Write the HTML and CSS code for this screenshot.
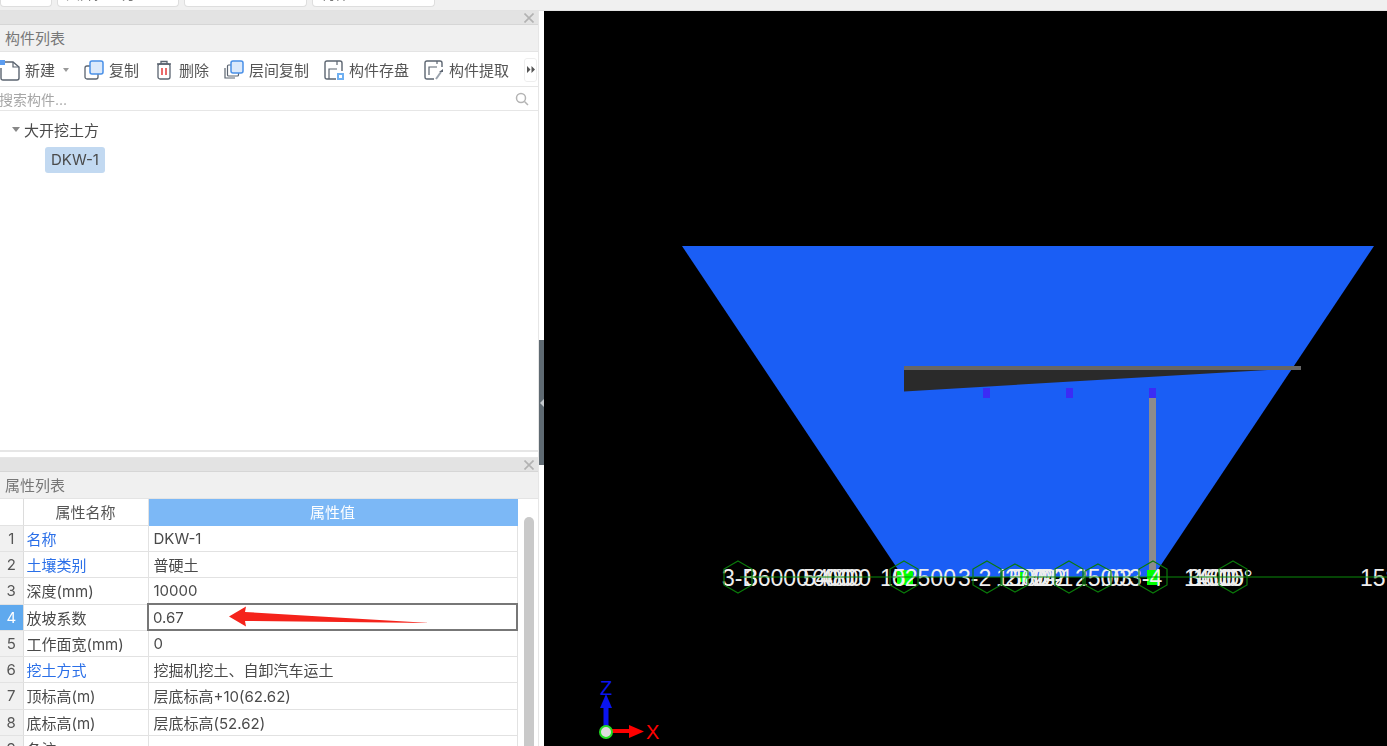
FILE: index.html
```html
<!doctype html>
<html lang="en">
  <head>
    <meta charset="UTF-8" />
    <title>构件列表</title>
    <link rel="stylesheet" href="styles.css">
  </head>
  <body>
    <div class="topbar">
      <div class="combo combo-first"></div>
      <div class="combo combo-second"><span>大开挖土方</span></div>
      <div class="combo combo-wide"></div>
      <div class="combo combo-wide"><span>构件</span></div>
    </div>

    <div class="main">
      <div class="left">
        <section class="panel panel-list">
          <div class="dock">
            <svg width="10" height="10" viewBox="0 0 10 10" stroke="#b2b2b2" stroke-width="1.6"><path d="M0.500 0.500L9.500 9.500M9.500 0.500L0.500 9.500"/></svg>
          </div>
          <div class="title">构件列表</div>
          <div class="toolbar">
            <div class="tool tool-new">
              <svg width="20" height="22" viewBox="0 0 20 22" fill="none">
                <path d="M2 3H13L19 8V19Q19 21 17 21H3Q1 21 1 19V9" stroke="#5b6470" stroke-width="1.4"/>
                <path d="M13 3V8H19" stroke="#5b6470" stroke-width="1.2"/>
                <rect x="0" y="1" width="5" height="5" fill="#5c9df0"/>
              </svg>
              <span>新建</span>
              <i class="caret"></i>
            </div>
            <div class="tool tool-copy">
              <svg width="20" height="20" viewBox="0 0 20 20" fill="none">
                <rect x="1" y="6" width="13" height="13" rx="2" fill="#fff" stroke="#5b6470" stroke-width="1.3"/>
                <rect x="6" y="1" width="13" height="13" rx="2" fill="#dbe9fb" stroke="#4a90e8" stroke-width="1.5"/>
              </svg>
              <span>复制</span>
            </div>
            <div class="tool tool-del">
              <svg width="16" height="20" viewBox="0 0 16 20" fill="none" stroke="#5b6470" stroke-width="1.3">
                <path d="M1 4H15M5 4V1.500H11V4"/>
                <rect x="2" y="4" width="12" height="15" rx="2"/>
                <path d="M6 8V15M10 8V15" stroke="#e33a3a" stroke-width="1.5"/>
              </svg>
              <span>删除</span>
            </div>
            <div class="tool tool-floor">
              <svg width="20" height="20" viewBox="0 0 20 20" fill="none">
                <path d="M1 8V18H11" stroke="#5b6470" stroke-width="1.2"/>
                <rect x="3.500" y="5" width="11" height="11" rx="1" fill="#fff" stroke="#5b6470" stroke-width="1.2"/>
                <rect x="7" y="1" width="12" height="12" rx="2" fill="#dbe9fb" stroke="#4a90e8" stroke-width="1.5"/>
              </svg>
              <span>层间复制</span>
            </div>
            <div class="tool tool-save">
              <svg width="20" height="20" viewBox="0 0 20 20" fill="none">
                <path d="M12 19H3Q1 19 1 17V3Q1 1 3 1H16Q18 1 18 3V11" stroke="#5b6470" stroke-width="1.4"/>
                <path d="M5 19V9H13M13 1V5" stroke="#5b6470" stroke-width="1.2"/>
                <rect x="13" y="13" width="7" height="7" fill="#6fb0f2"/>
                <rect x="15" y="15" width="3" height="3" fill="#fff"/>
              </svg>
              <span>构件存盘</span>
            </div>
            <div class="tool tool-get">
              <svg width="20" height="20" viewBox="0 0 20 20" fill="none">
                <path d="M10 19H3Q1 19 1 17V3Q1 1 3 1H16Q18 1 18 3V7" stroke="#5b6470" stroke-width="1.4"/>
                <path d="M5 15V7H13M13 1V4" stroke="#5b6470" stroke-width="1.2"/>
                <path d="M12 19L17 12" stroke="#9aa3ad" stroke-width="2"/>
                <path d="M15 12H19V9Z" fill="#5b6470"/>
              </svg>
              <span>构件提取</span>
            </div>
            <div class="more">
              <svg width="8" height="7" viewBox="0 0 8 7" fill="#555"><path d="M0 0L3.500 3.500L0 7ZM4.500 0L8 3.500L4.500 7Z"/></svg>
            </div>
          </div>
          <div class="search">
            <span>搜索构件...</span>
            <svg width="14" height="14" viewBox="0 0 14 14" fill="none" stroke="#b4b4b4" stroke-width="1.5">
              <circle cx="6" cy="6" r="4.500"/>
              <path d="M9.500 9.500L13 13"/>
            </svg>
          </div>
          <div class="tree">
            <div class="tree-root"><i class="tree-caret"></i><span>大开挖土方</span></div>
            <div class="tree-item"><span class="chip">DKW-1</span></div>
          </div>
        </section>

        <section class="panel panel-props">
          <div class="dock">
            <svg width="10" height="10" viewBox="0 0 10 10" stroke="#b2b2b2" stroke-width="1.6"><path d="M0.500 0.500L9.500 9.500M9.500 0.500L0.500 9.500"/></svg>
          </div>
          <div class="title">属性列表</div>
          <div class="table-wrap">
            <table class="props">
              <thead>
                <tr><th class="num"></th><th class="name">属性名称</th><th class="value">属性值</th></tr>
              </thead>
              <tbody>
                <tr><td class="num">1</td><td class="link key">名称</td><td>DKW-1</td></tr>
                <tr><td class="num">2</td><td class="link key">土壤类别</td><td>普硬土</td></tr>
                <tr><td class="num">3</td><td class="key">深度(mm)</td><td>10000</td></tr>
                <tr class="selected"><td class="num">4</td><td class="key">放坡系数</td><td class="editing">0.67</td></tr>
                <tr><td class="num">5</td><td class="key">工作面宽(mm)</td><td>0</td></tr>
                <tr><td class="num">6</td><td class="link key">挖土方式</td><td>挖掘机挖土、自卸汽车运土</td></tr>
                <tr><td class="num">7</td><td class="key">顶标高(m)</td><td>层底标高+10(62.62)</td></tr>
                <tr><td class="num">8</td><td class="key">底标高(m)</td><td>层底标高(52.62)</td></tr>
                <tr><td class="num">9</td><td class="key">备注</td><td></td></tr>
              </tbody>
            </table>
            <div class="scrollbar"><div class="thumb"></div></div>
          </div>
          <svg class="red-arrow" width="204" height="22" viewBox="228 606 204 22">
            <path d="M229 616.500L246 606.500L245 612L430 623L245 621L246 626.500Z" fill="#f5231b"/>
          </svg>
        </section>
      </div>

      <div class="splitter">
        <div class="handle"><i></i></div>
      </div>

      <svg class="view" viewBox="544 11 843 735" width="843" height="735">
        <path d="M682 246H1374L1153 577H903Z" fill="#1a5ef5"/>
        <path d="M904 368H1300L904 391.500Z" fill="#2a2a2a"/>
        <rect x="904" y="366" width="397" height="4" fill="#666"/>
        <g fill="#3b2cf5">
          <rect x="983" y="388" width="7" height="10"/>
          <rect x="1066" y="388" width="7" height="10"/>
          <rect x="1149" y="388" width="7" height="10"/>
        </g>
        <rect x="1149" y="398" width="7" height="174" fill="#8c8c8c"/>
        <g fill="#0f0">
          <rect x="897" y="570" width="16" height="15"/>
          <rect x="1147" y="570" width="13" height="15"/>
          <rect x="1020" y="572" width="8" height="10"/>
        </g>
        <g class="labels">
          <text x="722" y="586">3-B</text>
          <text x="745" y="586">36000</text>
          <text x="803" y="586">5400</text>
          <text x="812" y="586">6000</text>
          <text x="820" y="586">4800</text>
          <text x="880" y="586">15</text>
          <text x="892" y="586">02500</text>
          <text x="958" y="586">3-2</text>
          <text x="996" y="586">1500</text>
          <text x="1005" y="586">2700</text>
          <text x="1012" y="586">1800</text>
          <text x="1033" y="586">2-2</text>
          <text x="1040" y="586">2-1</text>
          <text x="1075" y="586">2500</text>
          <text x="1100" y="586">.03</text>
          <text x="1129" y="586">3-4</text>
          <text x="1184" y="586">1400</text>
          <text x="1188" y="586">3600</text>
          <text x="1193" y="586">1600</text>
          <text x="1218" y="586">15°</text>
          <text x="1360" y="586">15°</text>
        </g>
        <path d="M740 577H1387" stroke="#0a8a0a" stroke-width="1.200"/>
        <g class="hex" fill="none" stroke="#0a7a0a" stroke-width="1.200">
          <path d="M738 561L752 569V585L738 593L724 585V569Z"/>
          <path d="M904 561L918 569V585L904 593L890 585V569Z"/>
          <path d="M987 561L1001 569V585L987 593L973 585V569Z"/>
          <path d="M1015 564L1028 571V585L1015 592L1002 585V571Z"/>
          <path d="M1069 561L1083 569V585L1069 593L1055 585V569Z"/>
          <path d="M1098 564L1111 571V585L1098 592L1085 585V571Z"/>
          <path d="M1153 561L1167 569V585L1153 593L1139 585V569Z"/>
          <path d="M1233 561L1247 569V585L1233 593L1219 585V569Z"/>
        </g>
        <path d="M606 731V706" stroke="#0a14f0" stroke-width="5"/>
        <path d="M600 708L606 694L612 708Z" fill="#0a14f0"/>
        <path d="M606 731H631" stroke="#f00" stroke-width="4"/>
        <path d="M629 725L644 731.500L629 738Z" fill="#f00"/>
        <circle cx="606" cy="732" r="6" fill="#ddd" stroke="#22dd22" stroke-width="2"/>
        <text class="axis axis-z" x="600" y="695">Z</text>
        <text class="axis axis-x" x="646" y="739">X</text>
      </svg>
    </div>
  </body>
</html>
```

FILE: styles.css
```css
* {
  box-sizing: border-box;
}
html,
body {
  margin: 0;
  height: 746px;
  overflow: hidden;
}
body {
  font-family: Inter, "Noto Sans CJK SC", sans-serif;
  font-size: 15px;
  color: #4a4a4a;
  background: #fff;
}
.topbar {
  height: 11px;
  background: #f0f0f0;
  display: flex;
  gap: 5px;
  border-bottom: 1px solid #e2e2e2;
  filter: blur(0.4px);
}
.combo {
  height: 7px;
  background: #fff;
  border: 1px solid #dedede;
  border-top: none;
  border-radius: 0 0 4px 4px;
  overflow: hidden;
  font-size: 14px;
  line-height: 1;
  color: #777;
  padding-left: 8px;
}
.combo span {
  display: block;
  margin-top: -13px;
}
.combo-first {
  width: 52px;
}
.combo-second {
  width: 122px;
}
.combo-wide {
  width: 123px;
}
.main {
  display: flex;
  height: 735px;
  filter: blur(0.4px);
}
.left {
  width: 539px;
  display: flex;
  flex-direction: column;
  border-right: 1px solid #e6e6e6;
}
.panel {
  position: relative;
  width: 538px;
  background: #fff;
}
.panel-list {
  height: 441px;
  border-bottom: 2px solid #e6e6e6;
  display: flex;
  flex-direction: column;
}
.panel-props {
  margin-top: 5px;
  height: 289px;
  overflow: hidden;
  border-top: 1px solid #e6e6e6;
}
.dock {
  height: 14px;
  background: #e3e3e3;
  border-bottom: 1px solid #d6d6d6;
  display: flex;
  justify-content: flex-end;
  align-items: center;
  padding-right: 4px;
}
.title {
  height: 27px;
  line-height: 28px;
  padding-left: 5px;
  background: #f0f0f0;
  border-bottom: 1px solid #e4e4e4;
  color: #777;
}
.toolbar {
  height: 35px;
  padding-top: 1px;
  display: flex;
  align-items: center;
  border-bottom: 1px solid #e6e6e6;
}
.tool {
  display: flex;
  align-items: center;
  gap: 5px;
  color: #555;
}
.tool-new {
  width: 84px;
}
.caret {
  display: inline-block;
  margin-left: 3px;
  border-left: 3.5px solid transparent;
  border-right: 3.5px solid transparent;
  border-top: 4px solid #999;
}
.tool-copy {
  width: 72px;
}
.tool-del {
  width: 68px;
  gap: 7px;
}
.tool-floor {
  width: 100px;
}
.tool-save {
  width: 100px;
}
.tool-get {
  width: 100px;
}
.more {
  width: 13px;
  height: 24px;
  border: 1px solid #eee;
  border-radius: 3px;
  display: flex;
  align-items: center;
  justify-content: center;
}
.search {
  height: 24px;
  display: flex;
  align-items: center;
  justify-content: space-between;
  padding-right: 9px;
  border-bottom: 1px solid #e6e6e6;
  color: #a6a6a6;
  font-size: 14px;
}
.search span {
  margin-left: -1px;
}
.tree {
  flex: 1;
  padding-top: 5px;
}
.tree-root {
  display: flex;
  align-items: center;
  height: 26px;
  padding-left: 12px;
  gap: 4px;
}
.tree-caret {
  display: inline-block;
  border-left: 4px solid transparent;
  border-right: 4px solid transparent;
  border-top: 5px solid #888;
}
.tree-item {
  padding: 5px 0 0 45px;
}
.chip {
  display: inline-block;
  width: 60px;
  height: 26px;
  line-height: 26px;
  text-align: center;
  background: #c2d9f1;
  border-radius: 3px;
}
.table-wrap {
  display: flex;
  height: 248px;
  overflow: hidden;
}
.props {
  width: 518px;
  height: 262.5px;
  flex: none;
  border-collapse: collapse;
  table-layout: fixed;
}
.props th,
.props td {
  height: 26.25px;
  padding: 0 0 0 5px;
  font-weight: normal;
  text-align: left;
  border: 1px solid #e2e2e2;
  border-left: none;
  white-space: nowrap;
}
.props th {
  border-top: none;
  text-align: center;
  padding: 0;
  color: #555;
}
.props .num {
  width: 23px;
  padding: 0;
  text-align: center;
  background: #f1f1f1;
  color: #555;
  border-right: 1px solid #dcdcdc;
}
.props th.num {
  background: #fff;
}
.props .name {
  width: 125px;
}
.props td.key {
  padding-left: 3px;
}
.props th.value {
  background: #7cb8f6;
  color: #fff;
  border-color: #7cb8f6;
}
.link {
  color: #2a6fe8;
}
.selected .num {
  background: #5fa9ee;
  color: #fff;
}
.props .editing {
  border: 2px solid #777;
  padding-left: 4px;
}
.scrollbar {
  flex: 1;
  padding: 18px 3px 0 6px;
}
.thumb {
  width: 10px;
  height: 240px;
  background: #c9c9c9;
  border-radius: 5px;
}
.red-arrow {
  position: absolute;
  left: 228px;
  top: 148px;
}
.splitter {
  width: 5px;
  height: 735px;
  padding-top: 329px;
  background: #fff;
}
.handle {
  height: 125px;
  background: #5f6a72;
  display: flex;
  align-items: center;
  justify-content: center;
}
.handle i {
  border-top: 4px solid transparent;
  border-bottom: 4px solid transparent;
  border-right: 4px solid #c5cace;
}
.view {
  display: block;
  flex: none;
  background: #000;
}
.labels text {
  font-family: "Liberation Sans", sans-serif;
  font-size: 23px;
  fill: #eee;
}
.axis {
  font-family: "Liberation Sans", sans-serif;
  font-size: 20px;
}
.axis-z {
  fill: #0a14f0;
}
.axis-x {
  fill: #f00;
}
```
